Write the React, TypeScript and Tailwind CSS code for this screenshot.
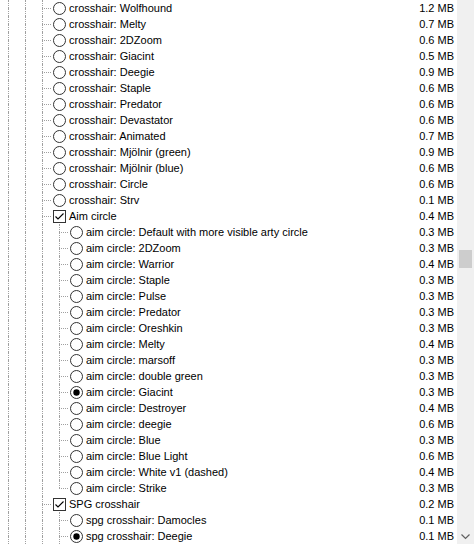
import React from 'react';

type Item = {
  label: string;
  size: string;
  kind: 'radio' | 'check';
  level: 3 | 4;
  checked?: boolean;
  last?: boolean;
};

const items: Item[] = [
  { label: 'crosshair: Wolfhound', size: '1.2 MB', kind: 'radio', level: 3 },
  { label: 'crosshair: Melty', size: '0.7 MB', kind: 'radio', level: 3 },
  { label: 'crosshair: 2DZoom', size: '0.6 MB', kind: 'radio', level: 3 },
  { label: 'crosshair: Giacint', size: '0.5 MB', kind: 'radio', level: 3 },
  { label: 'crosshair: Deegie', size: '0.9 MB', kind: 'radio', level: 3 },
  { label: 'crosshair: Staple', size: '0.6 MB', kind: 'radio', level: 3 },
  { label: 'crosshair: Predator', size: '0.6 MB', kind: 'radio', level: 3 },
  { label: 'crosshair: Devastator', size: '0.6 MB', kind: 'radio', level: 3 },
  { label: 'crosshair: Animated', size: '0.7 MB', kind: 'radio', level: 3 },
  { label: 'crosshair: Mjölnir (green)', size: '0.9 MB', kind: 'radio', level: 3 },
  { label: 'crosshair: Mjölnir (blue)', size: '0.6 MB', kind: 'radio', level: 3 },
  { label: 'crosshair: Circle', size: '0.6 MB', kind: 'radio', level: 3 },
  { label: 'crosshair: Strv', size: '0.1 MB', kind: 'radio', level: 3 },
  { label: 'Aim circle', size: '0.4 MB', kind: 'check', level: 3, checked: true },
  { label: 'aim circle: Default with more visible arty circle', size: '0.3 MB', kind: 'radio', level: 4 },
  { label: 'aim circle: 2DZoom', size: '0.3 MB', kind: 'radio', level: 4 },
  { label: 'aim circle: Warrior', size: '0.4 MB', kind: 'radio', level: 4 },
  { label: 'aim circle: Staple', size: '0.3 MB', kind: 'radio', level: 4 },
  { label: 'aim circle: Pulse', size: '0.3 MB', kind: 'radio', level: 4 },
  { label: 'aim circle: Predator', size: '0.3 MB', kind: 'radio', level: 4 },
  { label: 'aim circle: Oreshkin', size: '0.3 MB', kind: 'radio', level: 4 },
  { label: 'aim circle: Melty', size: '0.4 MB', kind: 'radio', level: 4 },
  { label: 'aim circle: marsoff', size: '0.3 MB', kind: 'radio', level: 4 },
  { label: 'aim circle: double green', size: '0.3 MB', kind: 'radio', level: 4 },
  { label: 'aim circle: Giacint', size: '0.3 MB', kind: 'radio', level: 4, checked: true },
  { label: 'aim circle: Destroyer', size: '0.4 MB', kind: 'radio', level: 4 },
  { label: 'aim circle: deegie', size: '0.6 MB', kind: 'radio', level: 4 },
  { label: 'aim circle: Blue', size: '0.3 MB', kind: 'radio', level: 4 },
  { label: 'aim circle: Blue Light', size: '0.6 MB', kind: 'radio', level: 4 },
  { label: 'aim circle: White v1 (dashed)', size: '0.4 MB', kind: 'radio', level: 4 },
  { label: 'aim circle: Strike', size: '0.3 MB', kind: 'radio', level: 4, last: true },
  { label: 'SPG crosshair', size: '0.2 MB', kind: 'check', level: 3, checked: true },
  { label: 'spg crosshair: Damocles', size: '0.1 MB', kind: 'radio', level: 4 },
  { label: 'spg crosshair: Deegie', size: '0.1 MB', kind: 'radio', level: 4, checked: true },
];

type GuideType = 'line' | 'tee' | 'end';

// one indent column of the tree (dotted guide)
function Guide({ type }: { type: GuideType }) {
  return (
    <div className="w-[17px] h-4 shrink-0 pl-2 flex flex-col">
      <div className="h-2 w-[9px] border-l border-dotted border-[#a0a0a0]" />
      <div
        className={`h-2 w-[9px] border-dotted border-[#a0a0a0] ${
          type === 'end' ? 'border-t' : type === 'tee' ? 'border-t border-l' : 'border-l'
        }`}
      />
    </div>
  );
}

function Radio({ checked }: { checked?: boolean }) {
  return (
    <svg width="13" height="13" viewBox="0 0 13 13" className="block">
      <circle cx="6.5" cy="6.5" r="6" fill="#fff" stroke="#333" strokeWidth="1" />
      {checked && <circle cx="6.5" cy="6.5" r="3.2" fill="#000" />}
    </svg>
  );
}

function Check({ checked }: { checked?: boolean }) {
  return (
    <svg width="13" height="13" viewBox="0 0 13 13" className="block">
      <rect x="0.5" y="0.5" width="12" height="12" fill="#fff" stroke="#333" strokeWidth="1" />
      {checked && (
        <polyline points="2.5,6.5 5,9 10.5,3.5" fill="none" stroke="#000" strokeWidth="1.1" />
      )}
    </svg>
  );
}

function Row({ item }: { item: Item }) {
  const guides: GuideType[] =
    item.level === 3 ? ['line', 'line', 'tee'] : ['line', 'line', 'line', item.last ? 'end' : 'tee'];
  return (
    <div className="h-4 flex items-center">
      {guides.map((g, i) => (
        <Guide key={i} type={g} />
      ))}
      <div className="w-[17px] shrink-0 pl-[2px]">
        {item.kind === 'radio' ? <Radio checked={item.checked} /> : <Check checked={item.checked} />}
      </div>
      <span className="ml-px whitespace-nowrap">{item.label}</span>
      <span className="ml-auto pr-[3px] whitespace-nowrap">{item.size}</span>
    </div>
  );
}

export default function App() {
  return (
    <div
      className="h-[544px] w-[474px] flex overflow-hidden bg-white text-black text-[11px] leading-4"
      style={{ fontFamily: '"Liberation Sans", Arial, sans-serif' }}
    >
      <div className="w-[457px] flex flex-col">
        {items.map((item) => (
          <Row key={item.label} item={item} />
        ))}
      </div>

      {/* scrollbar */}
      <div className="w-[17px] h-full bg-[#f0f0f0] flex flex-col">
        <div className="h-[250px]" />
        <div className="h-[18px] mx-[2px] bg-[#cdcdcd]" />
        <div className="flex-1" />
        <div className="h-[10px] flex justify-center">
          <svg width="9" height="6" viewBox="0 0 9 6" className="block">
            <polyline points="0.5,0.5 4.5,4.5 8.5,0.5" fill="none" stroke="#606060" strokeWidth="1.2" />
          </svg>
        </div>
      </div>
    </div>
  );
}
